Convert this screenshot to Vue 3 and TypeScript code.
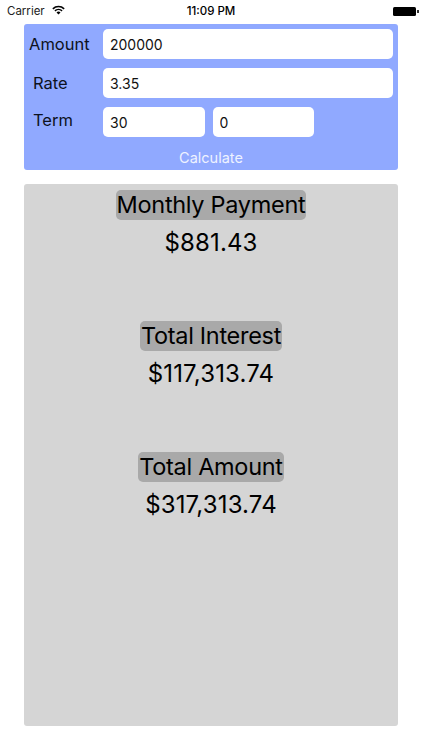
<script setup lang="ts">
import { ref } from "vue";

const amount = ref("200000");
const rate = ref("3.35");
const years = ref("30");
const months = ref("0");

const results = [
  { label: "Monthly Payment", value: "$881.43" },
  { label: "Total Interest", value: "$117,313.74" },
  { label: "Total Amount", value: "$317,313.74" },
];
</script>

<template>
  <div class="screen">
    <div class="status_bar">
      <div class="status_left">
        <span>Carrier</span>
        <svg class="wifi" width="13" height="10" viewBox="0 0 13 10">
          <path d="M0.3 3.2 A9 9 0 0 1 12.7 3.2 L11.6 4.4 A7.4 7.4 0 0 0 1.4 4.4 Z" fill="#000" />
          <path d="M2.4 5.3 A6 6 0 0 1 10.6 5.3 L9.5 6.5 A4.4 4.4 0 0 0 3.5 6.5 Z" fill="#000" />
          <path d="M4.5 7.4 A3 3 0 0 1 8.5 7.4 L6.5 9.6 Z" fill="#000" />
        </svg>
      </div>
      <span class="status_time">11:09 PM</span>
      <div class="battery"><div class="battery_body"></div><div class="battery_tip"></div></div>
    </div>

    <form class="calc_form" @submit.prevent>
      <div class="form_row">
        <label class="wide">Amount</label>
        <input v-model="amount" class="field" type="text" />
      </div>
      <div class="form_row">
        <label>Rate</label>
        <input v-model="rate" class="field" type="text" />
      </div>
      <div class="form_row">
        <label class="raised">Term</label>
        <input v-model="years" class="field short" type="text" />
        <input v-model="months" class="field short" type="text" />
      </div>
      <button type="submit" class="calculate">Calculate</button>
    </form>

    <div class="results">
      <div v-for="result in results" :key="result.label" class="result">
        <span class="result_label">{{ result.label }}</span>
        <span class="result_value">{{ result.value }}</span>
      </div>
    </div>
  </div>
</template>

<style>
html, body {
  background: #fff;
}
</style>

<style scoped>
* {
  box-sizing: border-box;
}

.screen {
  width: 422px;
  height: 750px;
  display: flex;
  flex-direction: column;
  font-family: Inter, "Liberation Sans", sans-serif;
  color: #000;
  overflow: hidden;
}

.status_bar {
  height: 24px;
  display: grid;
  grid-template-columns: 1fr auto 1fr;
  align-items: center;
  padding: 0 3px 2px 7px;
  font-size: 11.5px;
}

.status_left {
  display: flex;
  align-items: center;
  gap: 7px;
  color: #222;
}

.wifi {
  margin-top: -2px;
}

.status_time {
  font-weight: 500;
  margin-left: -4px;
}

.battery {
  justify-self: end;
  display: flex;
  align-items: center;
}

.battery_body {
  width: 23px;
  height: 9px;
  background: #000;
  border-radius: 1.5px;
}

.battery_tip {
  width: 2px;
  height: 3px;
  background: #333;
  margin-left: 1px;
}

.calc_form {
  width: 374px;
  height: 146px;
  margin-left: 24px;
  padding: 5px 5px 0 0;
  background: #90a9ff;
  border-radius: 3px;
  display: flex;
  flex-direction: column;
  gap: 9px;
}

.form_row {
  display: flex;
  align-items: center;
  gap: 8px;
  height: 30px;
}

.form_row label {
  width: 71px;
  padding-left: 9px;
  font-size: 16.5px;
  color: #0d1220;
}

.form_row label.wide {
  padding-left: 5px;
}

.form_row label.raised {
  margin-top: -4px;
}

.field {
  flex: 1;
  min-width: 0;
  height: 30px;
  border: none;
  outline: none;
  background: #fff;
  border-radius: 5px;
  padding: 0 7px;
  font-family: inherit;
  font-size: 14px;
  color: #111;
}

.field.short {
  flex: none;
  width: 101.5px;
}

.calculate {
  margin-top: 3px;
  border: none;
  background: none;
  padding: 0 0 0 5px;
  font-family: inherit;
  font-size: 14.5px;
  color: #eef2ff;
  text-align: center;
}

.results {
  width: 374px;
  height: 542px;
  margin: 14px 0 0 24px;
  padding-top: 6px;
  background: #d5d5d5;
  border-radius: 3px;
  display: flex;
  flex-direction: column;
  align-items: center;
  gap: 70px;
}

.result {
  display: flex;
  flex-direction: column;
  align-items: center;
  gap: 8px;
  height: 61px;
}

.result_label {
  padding: 0 1px;
  height: 30px;
  line-height: 30px;
  background: #a9a9a9;
  border-radius: 5px;
  font-size: 23.5px;
  letter-spacing: -0.3px;
}

.result_value {
  font-size: 24px;
  line-height: 30px;
  letter-spacing: 0.15px;
}
</style>
